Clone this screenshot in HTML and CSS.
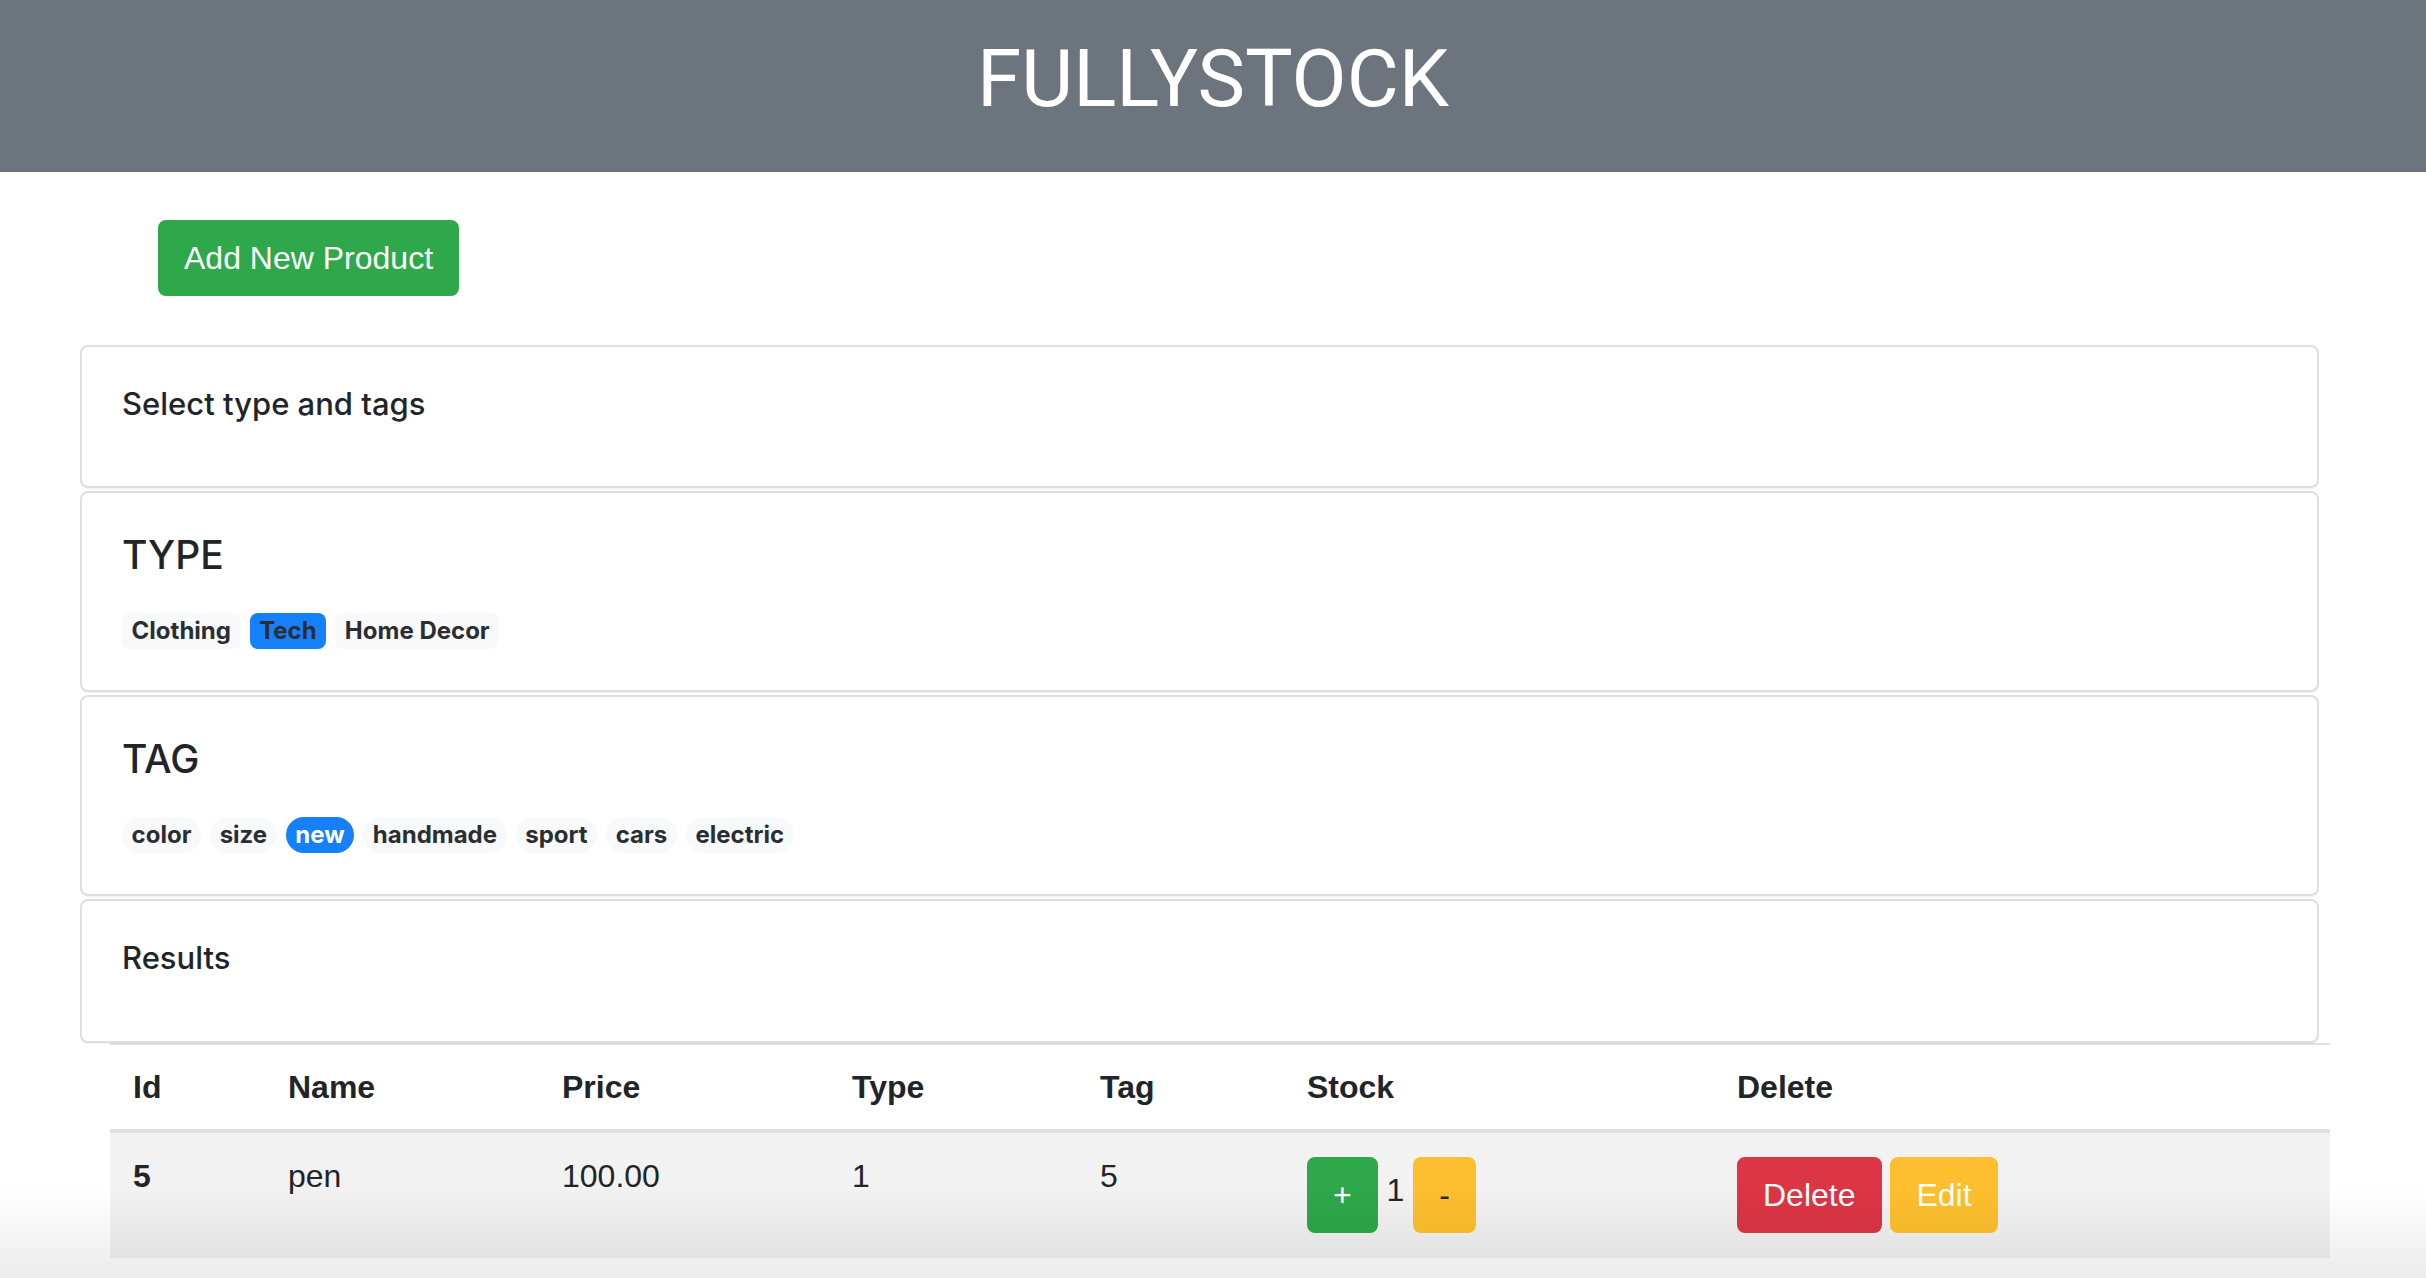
FILE: index.html
```html
<!DOCTYPE html>
<html lang="en">
<head>
<meta charset="utf-8">
<title>FullyStock</title>
<link rel="stylesheet" href="styles.css">
</head>
<body>
<header class="topbar">
  <h1 class="brand">FULLYSTOCK</h1>
</header>
<main class="page">
  <div class="toolbar">
    <button class="btn btn-success" type="button">Add New Product</button>
  </div>
  <section class="cards">
    <div class="card">
      <div class="card-body">
        <h5 class="card-title">Select type and tags</h5>
      </div>
    </div>
    <div class="card">
      <div class="card-body">
        <h5 class="section-title">TYPE</h5>
        <div class="badges">
          <span class="badge badge-light">Clothing</span>
          <span class="badge badge-primary">Tech</span>
          <span class="badge badge-light">Home Decor</span>
        </div>
      </div>
    </div>
    <div class="card">
      <div class="card-body">
        <h5 class="section-title">TAG</h5>
        <div class="badges">
          <span class="badge badge-pill badge-light">color</span>
          <span class="badge badge-pill badge-light">size</span>
          <span class="badge badge-pill badge-primary badge-white">new</span>
          <span class="badge badge-pill badge-light">handmade</span>
          <span class="badge badge-pill badge-light">sport</span>
          <span class="badge badge-pill badge-light">cars</span>
          <span class="badge badge-pill badge-light">electric</span>
        </div>
      </div>
    </div>
    <div class="card">
      <div class="card-body">
        <h5 class="card-title">Results</h5>
      </div>
    </div>
  </section>
  <div class="table-wrap">
    <table class="table">
      <colgroup>
        <col class="c-id"><col class="c-name"><col class="c-price"><col class="c-type"><col class="c-tag"><col class="c-stock"><col class="c-del">
      </colgroup>
      <thead>
        <tr>
          <th>Id</th><th>Name</th><th>Price</th><th>Type</th><th>Tag</th><th>Stock</th><th>Delete</th>
        </tr>
      </thead>
      <tbody>
        <tr>
          <th class="row-id">5</th>
          <td>pen</td>
          <td>100.00</td>
          <td>1</td>
          <td>5</td>
          <td><button class="btn btn-success row-btn" type="button">+</button> 1 <button class="btn btn-warning row-btn dark" type="button">-</button></td>
          <td><button class="btn btn-danger row-btn" type="button">Delete</button> <button class="btn btn-warning row-btn" type="button">Edit</button></td>
        </tr>
      </tbody>
    </table>
  </div>
</main>
<div class="window-shade"></div>
</body>
</html>
```
FILE: styles.css
```css
html, body {
  margin: 0;
  padding: 0;
}

body {
  font-family: "Liberation Sans", Arial, sans-serif;
  color: #212529;
  background: #ffffff;
  height: 1278px;
  overflow: hidden;
}

.topbar {
  background: #6c757d;
  height: 172px;
  box-sizing: border-box;
  padding-top: 31px;
  text-align: center;
}

.brand {
  margin: 0;
  font-family: Roboto, "Liberation Sans", sans-serif;
  font-weight: 400;
  font-size: 80px;
  line-height: 96px;
  color: #ffffff;
}

.toolbar {
  padding: 48px 0 0 158px;
}

.btn {
  display: inline-block;
  font-family: "Liberation Sans", Arial, sans-serif;
  font-size: 32px;
  line-height: 48px;
  font-weight: 400;
  padding: 12px 24px;
  border: 2px solid transparent;
  border-radius: 8px;
  color: #ffffff;
  vertical-align: middle;
  cursor: pointer;
  margin: 0;
}

.btn-success {
  background: #2ea84a;
  border-color: #2ea84a;
}

.btn-warning {
  background: #fdbf2e;
  border-color: #fdbf2e;
}

.btn-warning.dark {
  color: #212529;
}

.btn-danger {
  background: #dc3545;
  border-color: #dc3545;
}

.cards {
  margin: 49px 107px 0 80px;
  display: flex;
  flex-direction: column;
  gap: 3px;
}

.card {
  border: 2px solid #dfdfdf;
  border-radius: 8px;
  background: #ffffff;
  box-shadow: 0 1px 0 rgba(0, 0, 0, 0.05);
}

.card-body {
  padding: 38px 40px 39px;
  font-family: Inter, "Noto Sans", sans-serif;
}

.card-title {
  margin: 0 0 24px;
  font-family: Inter, "Noto Sans", sans-serif;
  font-size: 31px;
  font-weight: 500;
  line-height: 38.4px;
  color: #212529;
}

.section-title {
  margin: 0 0 24px;
  font-family: Inter, "Noto Sans", sans-serif;
  font-size: 39px;
  font-weight: 500;
  line-height: 48px;
  color: #212529;
}

.badges {
  display: flex;
  align-items: flex-start;
  gap: 9px;
  height: 48px;
  padding-top: 10px;
  box-sizing: border-box;
}

.badge {
  display: inline-block;
  padding: 6px 9.6px;
  font-family: Inter, "Noto Sans", sans-serif;
  font-size: 24px;
  font-weight: 700;
  line-height: 1;
  border-radius: 8px;
  white-space: nowrap;
}

.badge-pill {
  border-radius: 320px;
}

.badge-light {
  background: #f8f9fa;
  color: #2a2e33;
}

.badge-primary {
  background: #1580fa;
  color: #2a2e33;
}

.badge-white {
  color: #ffffff;
}

.table-wrap {
  padding-left: 110px;
}

.table {
  width: 2220px;
  border-collapse: collapse;
  table-layout: fixed;
  font-size: 32px;
  line-height: 48px;
  color: #212529;
}

.c-id { width: 155px; }
.c-name { width: 274px; }
.c-price { width: 290px; }
.c-type { width: 248px; }
.c-tag { width: 207px; }
.c-stock { width: 430px; }
.c-del { width: 616px; }

.table thead th {
  text-align: left;
  font-weight: 700;
  padding: 18px 23px;
  vertical-align: bottom;
  border-top: 2px solid #dee2e6;
  border-bottom: 4px solid #dee2e6;
}

.table tbody tr {
  background: #f2f2f2;
}

.table tbody td,
.table tbody th {
  text-align: left;
  padding: 19px 23px 25px;
  vertical-align: top;
  white-space: nowrap;
}

.table .row-id {
  font-weight: 700;
}

.row-btn {
  margin-top: 5px;
}

.window-shade {
  position: fixed;
  left: 0;
  right: 0;
  bottom: 0;
  height: 90px;
  background: linear-gradient(to bottom, rgba(0, 0, 0, 0), rgba(0, 0, 0, 0.08));
  pointer-events: none;
}
```
